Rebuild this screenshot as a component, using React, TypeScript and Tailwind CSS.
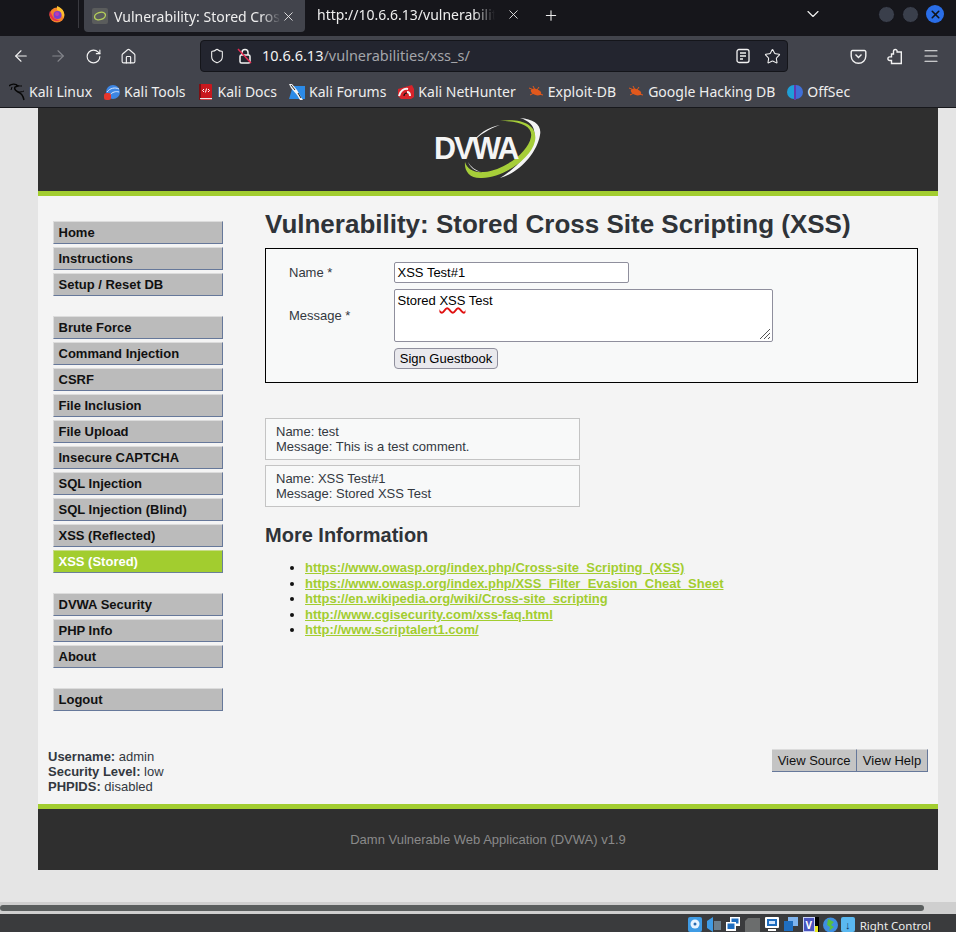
import { ArrowLeft, ArrowRight, ChevronDown, Home, Menu, Plus, RotateCw, Shield, Star, X } from 'lucide-react';

const MENU_GROUPS = [
  ['Home', 'Instructions', 'Setup / Reset DB'],
  ['Brute Force', 'Command Injection', 'CSRF', 'File Inclusion', 'File Upload', 'Insecure CAPTCHA', 'SQL Injection', 'SQL Injection (Blind)', 'XSS (Reflected)', 'XSS (Stored)'],
  ['DVWA Security', 'PHP Info', 'About'],
  ['Logout'],
];

const LINKS = [
  'https://www.owasp.org/index.php/Cross-site_Scripting_(XSS)',
  'https://www.owasp.org/index.php/XSS_Filter_Evasion_Cheat_Sheet',
  'https://en.wikipedia.org/wiki/Cross-site_scripting',
  'http://www.cgisecurity.com/xss-faq.html',
  'http://www.scriptalert1.com/',
];

function Firefox() {
  return (
    <svg width="18" height="18" viewBox="0 0 18 18">
      <circle cx="9" cy="10" r="7.500" fill="#f5822a" />
      <path d="M9 1c3 1 6 3 7 7 .5 2 0 4-1 5-1-4-3-7-6-8z" fill="#fcc02e" />
      <path d="M2 6c-1 2-1 5 1 7 2 3 6 4 9 2-4 0-7-2-8-5z" fill="#e8304d" />
      <circle cx="9.500" cy="10" r="4" fill="#7a3fd0" />
      <circle cx="9" cy="9" r="2" fill="#c23bb0" />
    </svg>
  );
}

function Favicon() {
  return (
    <div className="flex h-4 w-4 items-center justify-center rounded-[2px] bg-[#5a5c5c]">
      <svg width="14" height="12" viewBox="0 0 14 12">
        <ellipse cx="7" cy="6" rx="5.600" ry="3.600" transform="rotate(-18 7 6)" fill="none" stroke="#b5cf5a" strokeWidth="1.400" />
      </svg>
    </div>
  );
}

function Bookmark({ label, icon }: { label: string; icon: React.ReactNode }) {
  return (
    <div className="flex items-center gap-1">
      <div className="flex h-4 w-4 items-center justify-center">{icon}</div>
      <span>{label}</span>
    </div>
  );
}

function Bug() {
  return (
    <svg width="16" height="12" viewBox="0 0 16 12">
      <ellipse cx="8" cy="6" rx="5.500" ry="3" transform="rotate(20 8 6)" fill="#e2581c" />
      <path d="M1 2l5 2M2 9l4-2M11 1L9 4M15 9l-4-1M5 0l2 4" stroke="#e2581c" strokeWidth="1" />
    </svg>
  );
}

const BOOKMARKS = [
  {
    label: 'Kali Linux',
    icon: (
      <svg width="16" height="18" viewBox="0 0 16 18" fill="none" stroke="#070707">
        <path d="M0 3C3 0 7 1 9 3l-3 1c-1 2 1 4 3 5 3 1 5 3 6 8" strokeWidth="1.400" />
        <path d="M7 2c2 1 4 1 6 1M9 9c2 0 4 0 6-1M3 4L2 7" strokeWidth="1" />
      </svg>
    ),
  },
  {
    label: 'Kali Tools',
    icon: (
      <svg width="16" height="16" viewBox="0 0 16 16">
        <circle cx="9" cy="8" r="7" fill="#3d86e4" />
        <path d="M3 8c3-4 8-5 12-3M6 11c2-3 6-4 9-3" stroke="#dbeaff" strokeWidth="1" fill="none" />
        <rect x="0" y="9" width="7" height="7" rx="2.500" fill="#e5362c" />
      </svg>
    ),
  },
  {
    label: 'Kali Docs',
    icon: (
      <svg width="13" height="16" viewBox="0 0 13 16">
        <rect x="0" y="0" width="13" height="16" rx="1" fill="#c8181e" />
        <rect x="0" y="0" width="2" height="16" fill="#7d1014" />
        <rect x="1" y="14" width="12" height="1.200" fill="#e8e8e8" />
        <path d="M5 5L3.500 6.500 5 8M9 5l1.500 1.500L9 8M7.500 4.500L6.500 8.500" stroke="#fff" strokeWidth="1" fill="none" />
      </svg>
    ),
  },
  {
    label: 'Kali Forums',
    icon: (
      <svg width="16" height="16" viewBox="0 0 16 16">
        <path d="M4 2h12v13H0z" fill="#2c8be8" />
        <path d="M0 0l3 0 5 6 4 7 2 3-3 0-3-5-6-7z" fill="#f4f4f4" />
        <path d="M2 1l4 5M9 9l3 5" stroke="#222" strokeWidth="1" />
      </svg>
    ),
  },
  {
    label: 'Kali NetHunter',
    icon: (
      <svg width="16" height="16" viewBox="0 0 16 16">
        <path d="M0 5l14-4 2 4v8l-3 2H3l-3-3z" fill="#d8232a" />
        <path d="M1 12c1-5 5-8 9-7M12 12c0-3-1-4-3-4" stroke="#f4f4f4" strokeWidth="2" fill="none" />
        <path d="M6 12c0-2 1-3 3-3" stroke="#151515" strokeWidth="1.200" fill="none" />
      </svg>
    ),
  },
  { label: 'Exploit-DB', icon: <Bug /> },
  { label: 'Google Hacking DB', icon: <Bug /> },
  {
    label: 'OffSec',
    icon: (
      <svg width="16" height="16" viewBox="0 0 16 16">
        <path d="M7 1a7 7 0 0 0 0 14z" fill="#1f9fd8" />
        <path d="M9 1a7 7 0 0 1 0 14z" fill="#3f6fd8" />
        <rect x="7.200" y="1" width="1.600" height="15" fill="#6a35c8" />
      </svg>
    ),
  },
];

function TabBar() {
  return (
    <div className="flex h-9 items-start bg-[#16161b] text-[14px] text-[#eeeeee]">
      <div className="flex h-7 w-[79px] shrink-0 items-center border-r border-[#3a3a40] pl-[48px]">
        <Firefox />
      </div>
      <div className="ml-[5px] flex h-8 w-[221px] shrink-0 items-center rounded-b-[4px] bg-[#42444c] pl-2 pr-2">
        <Favicon />
        <span className="ml-[6px] w-[167px] whitespace-nowrap [mask-image:linear-gradient(to_right,black_88%,transparent)]">
          Vulnerability: Stored Cros
        </span>
        <X size={15} strokeWidth={1.400} />
      </div>
      <div className="flex h-7 w-[221px] shrink-0 items-center pl-3">
        <span className="w-[178px] whitespace-nowrap [mask-image:linear-gradient(to_right,black_88%,transparent)]">
          http://10.6.6.13/vulnerabilitie
        </span>
        <X size={15} strokeWidth={1.400} className="ml-[11px]" />
      </div>
      <div className="ml-[17px] flex h-[30px] w-[16px] shrink-0 items-center justify-center">
        <Plus size={17} strokeWidth={1.600} />
      </div>
      <div className="ml-[244px] flex h-[27px] items-center">
        <ChevronDown size={20} strokeWidth={1.400} />
      </div>
      <div className="ml-[55px] flex h-7 items-center gap-[7px]">
        <div className="h-[17px] w-[17px] rounded-full border border-[#14141a] bg-[#3a3f4b]" />
        <div className="h-[17px] w-[17px] rounded-full border border-[#14141a] bg-[#3a3f4b]" />
        <div className="flex h-[18px] w-[18px] items-center justify-center rounded-full bg-[#2a6ee8]">
          <X size={13} strokeWidth={3} className="text-[#10131a]" />
        </div>
      </div>
    </div>
  );
}

function NavBar() {
  return (
    <div className="flex h-10 items-center bg-[#42444c] text-[#f2f2f2]">
      <div className="flex w-[200px] shrink-0 items-center pl-[12px]">
        <ArrowLeft size={18} strokeWidth={1.500} />
        <ArrowRight size={18} strokeWidth={1.500} className="ml-[19px] text-[#83858b]" />
        <RotateCw size={17} strokeWidth={1.600} className="ml-[18px]" />
        <Home size={17} strokeWidth={1.600} className="ml-[18px]" />
      </div>
      <div className="flex h-[32px] w-[588px] shrink-0 items-center rounded-[4px] border border-[#14151a] bg-[#23252f] pl-[8px] pr-[6px] text-[14.500px]">
        <Shield size={16} strokeWidth={1.600} />
        <svg className="ml-[12px]" width="16" height="16" viewBox="0 0 16 16" fill="none">
          <rect x="3" y="7" width="10" height="8" rx="1.500" stroke="#f2f2f2" strokeWidth="1.500" />
          <path d="M5 7V4.500a3 3 0 0 1 6 0V7" stroke="#f2f2f2" strokeWidth="1.500" />
          <path d="M1 1l13 14" stroke="#e22850" strokeWidth="1.500" />
        </svg>
        <span className="ml-[9px]">10.6.6.13</span>
        <span className="text-[#a4a5aa]">/vulnerabilities/xss_s/</span>
        <div className="ml-auto flex items-center gap-[13px]">
          <svg width="16" height="16" viewBox="0 0 16 16" fill="none" stroke="#f2f2f2" strokeWidth="1.300">
            <rect x="2" y="1.500" width="12" height="13" rx="2" />
            <path d="M5 5h6M5 8h6M5 11h3" />
          </svg>
          <Star size={17} strokeWidth={1.500} />
        </div>
      </div>
      <div className="ml-[62px] flex items-center gap-[20px]">
        <svg width="17" height="17" viewBox="0 0 17 17" fill="none" stroke="#f2f2f2" strokeWidth="1.400">
          <path d="M2.500 2.500h12a1.300 1.300 0 0 1 1.300 1.300V8a7.300 7.300 0 0 1-14.600 0V3.800a1.300 1.300 0 0 1 1.300-1.300z" />
          <path d="M5.500 6.500l3 3 3-3" />
        </svg>
        <svg width="17" height="17" viewBox="0 0 17 17" fill="none" stroke="#f2f2f2" strokeWidth="1.400">
          <path d="M7 3.500V2.800a1.800 1.800 0 0 1 3.600 0v.7h4.200v11.500H5V12H3.200a1.800 1.800 0 0 1 0-3.600H5V5.500h2z" transform="translate(-.5 .5)" />
        </svg>
        <Menu size={18} strokeWidth={1.500} className="-ml-[2px]" />
      </div>
    </div>
  );
}

function BookmarksBar() {
  return (
    <div className="flex h-8 items-center gap-3 border-b border-[#17181c] bg-[#42444c] pl-[9px] text-[14px] text-[#eeeeee]">
      {BOOKMARKS.map((b) => (
        <Bookmark key={b.label} label={b.label} icon={b.icon} />
      ))}
    </div>
  );
}

function Logo() {
  return (
    <svg width="110" height="70" viewBox="0 0 110 70">
      <path d="M86 3C100 4 108 10 106 20 103 38 85 58 66 63 80 55 97 38 100 22 102 12 96 6 86 3z" fill="#f4f4f4" />
      <path d="M66 6C88 3 104 10 101 26 97 44 70 62 48 63 36 64 30 56 31 47 33 54 40 58 50 57 70 55 94 38 97 22 99 11 86 6 66 6z" fill="#a6ce39" />
      <path d="M66 10C54 12 44 19 39 27 45 20 55 14 66 10z" fill="#f4f4f4" />
      <path d="M34 47C36 52 40 56 47 57 41 55 37 52 34 47z" fill="#f4f4f4" />
      <text x="0" y="44" fontFamily="'Liberation Sans', Arial, sans-serif" fontWeight="700" fontSize="30.500" letterSpacing="-2" fill="#f4f4f4">DVWA</text>
    </svg>
  );
}

function SideMenu() {
  return (
    <div className="mt-[25px] flex w-[170px] shrink-0 flex-col gap-[20px]">
      {MENU_GROUPS.map((group, i) => (
        <div key={i} className="flex flex-col gap-[3px]">
          {group.map((item) => (
            <div
              key={item}
              className={
                item === 'XSS (Stored)'
                  ? 'flex h-[23px] items-center border border-t-[#c8dc88] border-l-[#c8dc88] border-r-[#6a7f9a] border-b-[#6a7f9a] bg-[#a2cd2f] pl-[4.500px] font-bold text-white'
                  : 'flex h-[23px] items-center border border-t-[#dcdcdc] border-l-[#dcdcdc] border-r-[#66789a] border-b-[#66789a] bg-[#bbbbbb] pl-[4.500px] font-bold text-[#111111]'
              }
            >
              {item}
            </div>
          ))}
        </div>
      ))}
    </div>
  );
}

function GuestForm() {
  return (
    <div className="flex h-[135px] w-[653px] border border-black bg-[#f8f9f9] pl-[23px] pt-[13px] text-[#33383f]">
      <div className="w-[105px] shrink-0">
        <div className="flex h-[21px] items-center">Name *</div>
        <div className="mt-[6px] flex h-[53px] items-center">Message *</div>
      </div>
      <div className="text-black">
        <div className="flex h-[21px] w-[235px] items-center rounded-[2px] border border-[#8f8f9d] bg-white pl-[2.500px]">XSS Test#1</div>
        <div className="relative mt-[6px] h-[53px] w-[379px] rounded-[2px] border border-[#8f8f9d] bg-white pl-[2.500px] pt-[3px] leading-[15px]">
          Stored <span className="underline decoration-[#e01010] decoration-wavy decoration-[1.500px] underline-offset-2">XSS</span> Test
          <svg className="absolute right-[1px] bottom-[1px]" width="12" height="12" viewBox="0 0 12 12" stroke="#555" strokeWidth="1">
            <path d="M1 11L11 1M5 11l6-6M9 11l2-2" />
          </svg>
        </div>
        <div className="mt-[6px] flex h-[21px] w-[104px] items-center justify-center rounded-[4px] border border-[#8f8f9d] bg-[#e9e9ed]">Sign Guestbook</div>
      </div>
    </div>
  );
}

function Comment({ name, message }: { name: string; message: string }) {
  return (
    <div className="h-[42px] w-[315px] border border-[#c4c4c4] bg-[#f8f9f9] pl-[10px] pt-[5px] leading-[15px] text-[#33383f]">
      <div>Name: {name}</div>
      <div>Message: {message}</div>
    </div>
  );
}

function Main() {
  return (
    <div className="ml-[42px] w-[653px]">
      <h1 className="h-[52px] whitespace-nowrap pt-[12px] text-[26px] font-bold leading-[32px] text-[#2f3338]">
        Vulnerability: Stored Cross Site Scripting (XSS)
      </h1>
      <GuestForm />
      <div className="mt-[35px] flex flex-col gap-[5px]">
        <Comment name="test" message="This is a test comment." />
        <Comment name="XSS Test#1" message="Stored XSS Test" />
      </div>
      <h2 className="mt-[15px] text-[20px] font-bold leading-[26px] text-[#2f3338]">More Information</h2>
      <ul className="mt-[12px] list-disc pl-[40px] leading-[15.600px] text-[#111111]">
        {LINKS.map((l) => (
          <li key={l}>
            <a className="font-bold text-[#a2cd2f] underline">{l}</a>
          </li>
        ))}
      </ul>
    </div>
  );
}

function StatusIcons() {
  return (
    <div className="flex items-start gap-[5px] pt-[3px]">
      <svg width="14" height="15" viewBox="0 0 14 15">
        <rect width="14" height="15" rx="2" fill="#3f9be4" />
        <circle cx="7" cy="7" r="4.500" fill="#e8f4ff" />
        <circle cx="7" cy="7" r="1.500" fill="#2a6bb0" />
      </svg>
      <svg width="14" height="15" viewBox="0 0 14 15">
        <path d="M0 4l6-4v15L0 11z" fill="#3f9be4" />
        <rect x="7" y="4" width="7" height="9" fill="#6d7f8c" />
      </svg>
      <svg width="14" height="15" viewBox="0 0 14 15">
        <rect x="4" y="0" width="10" height="9" fill="#fff" />
        <rect x="5.500" y="1.500" width="7" height="5" fill="#1f6ec0" />
        <rect x="0" y="5" width="10" height="9" fill="#fff" />
        <rect x="1.500" y="6.500" width="7" height="5.500" fill="#1f6ec0" />
      </svg>
      <svg width="15" height="15" viewBox="0 0 15 15">
        <path d="M3 1h12v14H0V4z" fill="#6b6d6d" />
      </svg>
      <svg width="14" height="15" viewBox="0 0 14 15">
        <rect width="14" height="11" rx="1" fill="#fff" />
        <rect x="2" y="2" width="10" height="7" fill="#1f6ec0" />
        <rect x="4" y="4" width="6" height="3" fill="#cfe4ff" />
        <rect x="3" y="12" width="8" height="2" fill="#fff" />
      </svg>
      <svg width="14" height="15" viewBox="0 0 14 15">
        <rect x="4" y="0" width="10" height="9" fill="#7fb4ee" />
        <rect x="0" y="4" width="9" height="10" fill="#1f6ec0" />
      </svg>
      <div className="flex">
        <div className="flex h-[15px] w-[12px] items-center justify-center border border-[#c9d2f5] bg-[#4a55c0] text-[10px] font-bold leading-none text-white">V</div>
        <div className="flex h-[15px] w-[4px] items-end bg-black">
          <div className="h-[6px] w-[3px] bg-[#e8e820]" />
        </div>
      </div>
      <svg className="-ml-[2px]" width="17" height="15" viewBox="0 0 17 15">
        <circle cx="8.500" cy="8" r="7.500" fill="#3f8fe0" />
        <path d="M6 2l6 3-3 3 3 2-5 4 1-4-3-2z" fill="#58c040" />
      </svg>
      <div className="-ml-[3px] flex h-[15px] w-[14px] items-center justify-center rounded-[2px] bg-[#5ab8f0] text-[11px] font-bold leading-none text-[#10305a]">↓</div>
    </div>
  );
}

export default function App() {
  return (
    <div className="flex h-[932px] w-[956px] flex-col overflow-hidden bg-[#e5e5e5] font-['Liberation_Sans',Arial,sans-serif] text-[13px]">
      <div className="font-['Noto_Sans',sans-serif]">
        <TabBar />
        <NavBar />
        <BookmarksBar />
      </div>

      <div className="ml-[38px] h-[762px] w-[900px]">
        <div className="flex h-[83px] justify-center bg-[#2f2f2f] pl-[2px] pt-[7px]">
          <Logo />
        </div>
        <div className="h-[5px] bg-[#a2cd2f]" />
        <div className="flex h-[608px] flex-col bg-[#f4f4f4]">
          <div className="flex h-[553px] pl-[15px]">
            <SideMenu />
            <Main />
          </div>
          <div className="flex items-start justify-between px-[10px]">
            <div className="leading-[15px] text-[#33383f]">
              <div><b>Username:</b> admin</div>
              <div><b>Security Level:</b> low</div>
              <div><b>PHPIDS:</b> disabled</div>
            </div>
            <div className="flex">
              <div className="flex h-[23px] w-[85px] items-center justify-center border-y border-r border-t-[#dcdcdc] border-b-[#66789a] border-r-[#66789a] bg-[#c4c4c4] text-[#111111]">View Source</div>
              <div className="flex h-[23px] w-[71px] items-center justify-center border-y border-r border-t-[#dcdcdc] border-b-[#66789a] border-r-[#66789a] bg-[#c4c4c4] text-[#111111]">View Help</div>
            </div>
          </div>
        </div>
        <div className="h-[5px] bg-[#a2cd2f]" />
        <div className="flex h-[61px] items-center justify-center bg-[#2f2f2f] text-[13px] text-[#8a8a8a]">
          Damn Vulnerable Web Application (DVWA) v1.9
        </div>
      </div>

      <div className="mt-[32px] flex h-3 items-center bg-[#cfcfcf]">
        <div className="h-[6px] w-[924px] rounded-full bg-[#5a5e5e]" />
      </div>

      <div className="flex h-[18px] items-start justify-end gap-[5px] bg-[#3a3b3d] pr-[25px] font-['Noto_Sans',sans-serif] text-[11.500px] leading-[15px] text-[#eeeeee]">
        <StatusIcons />
        <span className="pt-[4px]">Right Control</span>
      </div>
    </div>
  );
}
